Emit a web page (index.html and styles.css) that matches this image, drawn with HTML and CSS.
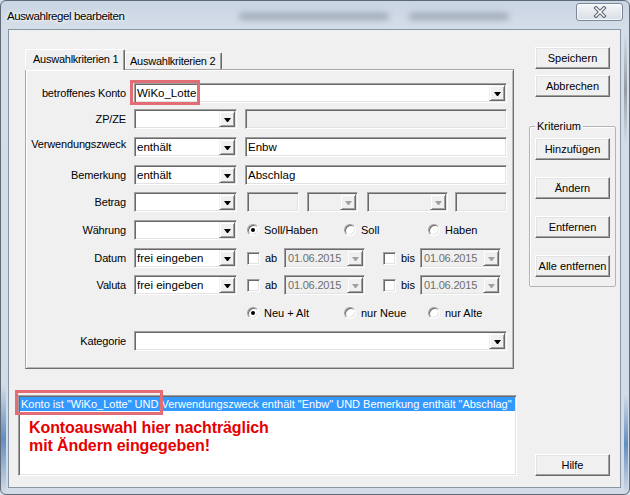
FILE: index.html
```html
<!DOCTYPE html>
<html>
<head>
<meta charset="utf-8">
<title>Auswahlregel bearbeiten</title>
<link rel="stylesheet" href="styles.css">
</head>
<body>

<div class="Window">
    <div class="TitleBar">
        <span class="TitleText">Auswahlregel bearbeiten</span>
        <span class="Ghost GhostOne"></span>
        <span class="Ghost GhostTwo"></span>
        <span class="CloseButton">
            <svg width="14" height="12" viewBox="0 0 14 12"><path d="M3 2 L11 10 M11 2 L3 10" stroke="#5b6674" stroke-width="3.6" stroke-linecap="square" fill="none"/><path d="M3 2 L11 10 M11 2 L3 10" stroke="#ffffff" stroke-width="1.5" stroke-linecap="square" fill="none"/></svg>
        </span>
    </div>

    <div class="Frame">
        <div class="Client">

            <div class="MainCol">
                <div class="TabStrip">
                    <span class="Tab Active">Auswahlkriterien 1</span>
                    <span class="Tab Second">Auswahlkriterien 2</span>
                </div>
                <div class="TabPanel">

                    <div class="FormRow">
                        <span class="FieldLabel">betroffenes Konto</span>
                        <div class="Combo Wide">
                            <span class="ComboText">WiKo_Lotte</span><span class="ComboBtn"></span>
                            <span class="Mark KontoMark"></span>
                        </div>
                    </div>

                    <div class="FormRow Gap6">
                        <span class="FieldLabel">ZP/ZE</span>
                        <div class="Combo Narrow"><span class="ComboText"></span><span class="ComboBtn"></span></div>
                        <div class="Edit Long Disabled"></div>
                    </div>

                    <div class="FormRow">
                        <span class="FieldLabel Raised">Verwendungszweck</span>
                        <div class="Combo Narrow"><span class="ComboText">enthält</span><span class="ComboBtn"></span></div>
                        <div class="Edit Long">Enbw</div>
                    </div>

                    <div class="FormRow">
                        <span class="FieldLabel">Bemerkung</span>
                        <div class="Combo Narrow"><span class="ComboText">enthält</span><span class="ComboBtn"></span></div>
                        <div class="Edit Long">Abschlag</div>
                    </div>

                    <div class="FormRow Gap7">
                        <span class="FieldLabel">Betrag</span>
                        <div class="Combo Narrow"><span class="ComboText"></span><span class="ComboBtn"></span></div>
                        <div class="Edit Disabled AmountA"></div>
                        <div class="Combo Disabled AmountB"><span class="ComboText"></span><span class="ComboBtn"></span></div>
                        <div class="Combo Disabled AmountC"><span class="ComboText"></span><span class="ComboBtn"></span></div>
                        <div class="Edit Disabled AmountD"></div>
                    </div>

                    <div class="FormRow">
                        <span class="FieldLabel">Währung</span>
                        <div class="Combo Narrow"><span class="ComboText"></span><span class="ComboBtn"></span></div>
                        <span class="Option First"><span class="Radio Checked"></span><span class="OptionText">Soll/Haben</span></span>
                        <span class="Option"><span class="Radio"></span><span class="OptionText">Soll</span></span>
                        <span class="Option"><span class="Radio"></span><span class="OptionText">Haben</span></span>
                    </div>

                    <div class="FormRow">
                        <span class="FieldLabel">Datum</span>
                        <div class="Combo Narrow"><span class="ComboText">frei eingeben</span><span class="ComboBtn"></span></div>
                        <span class="Check"></span><span class="CheckText">ab</span>
                        <div class="Combo Disabled DateBox"><span class="ComboText">01.06.2015</span><span class="ComboBtn"></span></div>
                        <span class="Check Later"></span><span class="CheckText">bis</span>
                        <div class="Combo Disabled DateBox"><span class="ComboText">01.06.2015</span><span class="ComboBtn"></span></div>
                    </div>

                    <div class="FormRow Gap7">
                        <span class="FieldLabel">Valuta</span>
                        <div class="Combo Narrow"><span class="ComboText">frei eingeben</span><span class="ComboBtn"></span></div>
                        <span class="Check"></span><span class="CheckText">ab</span>
                        <div class="Combo Disabled DateBox"><span class="ComboText">01.06.2015</span><span class="ComboBtn"></span></div>
                        <span class="Check Later"></span><span class="CheckText">bis</span>
                        <div class="Combo Disabled DateBox"><span class="ComboText">01.06.2015</span><span class="ComboBtn"></span></div>
                    </div>

                    <div class="FormRow">
                        <span class="FieldLabel"></span>
                        <span class="Spacer"></span>
                        <span class="Option First"><span class="Radio Checked"></span><span class="OptionText">Neu + Alt</span></span>
                        <span class="Option"><span class="Radio"></span><span class="OptionText">nur Neue</span></span>
                        <span class="Option"><span class="Radio"></span><span class="OptionText">nur Alte</span></span>
                    </div>

                    <div class="FormRow">
                        <span class="FieldLabel">Kategorie</span>
                        <div class="Combo Wide"><span class="ComboText"></span><span class="ComboBtn"></span></div>
                    </div>

                </div>

                <div class="ListBox">
                    <div class="ListItem Selected">Konto ist "WiKo_Lotte" UND Verwendungszweck enthält "Enbw" UND Bemerkung enthält "Abschlag"</div>
                    <div class="Note">Kontoauswahl hier nachträglich<br>mit Ändern eingegeben!</div>
                    <span class="Mark ListMark"></span>
                </div>
            </div>

            <div class="SideCol">
                <span class="Button">Speichern</span>
                <span class="Button">Abbrechen</span>
                <div class="GroupBox">
                    <span class="GroupTitle">Kriterium</span>
                    <span class="Button">Hinzufügen</span>
                    <span class="Button">Ändern</span>
                    <span class="Button">Entfernen</span>
                    <span class="Button">Alle entfernen</span>
                </div>
                <span class="Button HelpButton">Hilfe</span>
            </div>

        </div>
    </div>
</div>

</body>
</html>
```

FILE: styles.css
```css
	html, body {
		margin: 0;
		padding: 0;
	}
	body {
		font-family: "Liberation Sans", Arial, Helvetica, sans-serif;
		font-size: 11px;
		color: #000;
		background: #d3dde8;
	}

	/* window frame */
	.Window {
		box-sizing: border-box;
		width: 630px;
		height: 495px;
		border: 1px solid #5f6a76;
		border-radius: 6px;
		display: flex;
		flex-direction: column;
		overflow: hidden;
		background: linear-gradient(to bottom, #c8d5e3 0, #d5dee8 28px, #d3dce6 100%);
	}
	.TitleBar {
		flex: none;
		height: 28px;
		display: flex;
		align-items: center;
		padding-left: 6px;
	}
	.TitleText {
		font-size: 11.5px;
		letter-spacing: -0.4px;
		text-shadow: 0 0 6px #fff, 0 0 3px #fff;
		margin-top: 1px;
	}
	.Ghost {
		height: 7px;
		border-radius: 4px;
		background: rgba(45, 55, 75, 0.3);
		filter: blur(3px);
		margin-top: 2px;
	}
	.GhostOne {
		width: 150px;
		margin-left: 115px;
	}
	.GhostTwo {
		width: 100px;
		margin-left: 20px;
	}
	.CloseButton {
		box-sizing: border-box;
		width: 47px;
		height: 18px;
		margin: 2px 6px 0 auto;
		align-self: flex-start;
		border: 1px solid #7d8896;
		border-radius: 3px;
		background: linear-gradient(to bottom, #f4f6f9, #d8dfe7);
		box-shadow: inset 0 0 0 1px rgba(255, 255, 255, 0.7);
		display: flex;
		align-items: center;
		justify-content: center;
	}
	.Frame {
		flex: 1;
		display: flex;
		padding: 0 8px 6px 7px;
		background:
			linear-gradient(to bottom, rgba(60, 115, 180, 0), rgba(60, 115, 180, 0.75), rgba(60, 115, 180, 0)) left 0 top 355px / 5px 110px no-repeat,
			linear-gradient(to bottom, rgba(60, 115, 180, 0), rgba(60, 115, 180, 0.75), rgba(60, 115, 180, 0)) right 1px top 365px / 4px 100px no-repeat,
			linear-gradient(to bottom, rgba(70, 75, 85, 0), rgba(70, 75, 85, 0.45), rgba(70, 75, 85, 0)) right 2px top 5px / 3px 110px no-repeat;
	}
	.Client {
		flex: 1;
		display: flex;
		border: 1px solid #8796a5;
		background: #f0f0f0;
	}

	/* left part */
	.MainCol {
		flex: none;
		width: 518px;
	}
	.TabStrip {
		display: flex;
		align-items: flex-end;
		height: 20px;
		margin: 19px 0 0 16px;
		position: relative;
		z-index: 1;
	}
	.Tab {
		box-sizing: border-box;
		height: 17px;
		width: 97px;
		padding: 1px 0 0 4px;
		line-height: 15px;
		white-space: nowrap;
		letter-spacing: -0.25px;
		border: 1px solid;
		border-color: #fff #696969 transparent #fff;
		border-bottom: none;
		border-radius: 2px 2px 0 0;
		box-shadow: inset -1px 0 #a0a0a0;
		background: #f0f0f0;
	}
	.Tab.Active {
		width: 100px;
		height: 21px;
		margin-bottom: -1px;
		padding: 2px 0 0 7px;
		line-height: 15px;
	}
	.TabPanel {
		box-sizing: border-box;
		width: 489px;
		height: 300px;
		margin-left: 16px;
		padding-top: 13px;
		border: 1px solid;
		border-color: #a8a8a8 #6e6e6e #6e6e6e #a8a8a8;
		box-shadow: inset 1px 1px #fff, inset -1px -1px #b8b8b8;
		background: #f0f0f0;
	}

	.FormRow {
		display: flex;
		align-items: center;
		height: 20px;
		margin-top: 8px;
	}
	.FormRow:first-child {
		margin-top: 0;
	}
	.FormRow.Gap6 {
		margin-top: 6px;
	}
	.FormRow.Gap7 {
		margin-top: 7px;
	}
	.FieldLabel {
		flex: none;
		width: 100px;
		margin-right: 8px;
		text-align: right;
		white-space: nowrap;
		letter-spacing: -0.15px;
	}
	.FieldLabel.Raised {
		margin-bottom: 6px;
	}
	.Spacer {
		flex: none;
		width: 103px;
	}

	/* sunken boxes */
	.Combo, .Edit, .ListBox, .Check {
		box-sizing: border-box;
		border: 1px solid;
		border-color: #a0a0a0 #fff #fff #a0a0a0;
		box-shadow: inset 1px 1px #696969, inset -1px -1px #e3e3e3;
		background: #fff;
	}
	.Combo {
		position: relative;
		flex: none;
		height: 20px;
		display: flex;
		padding: 1px;
	}
	.ComboText {
		flex: 1;
		padding-left: 1px;
		font-size: 11.5px;
		line-height: 17px;
		white-space: nowrap;
		overflow: hidden;
	}
	.ComboBtn {
		box-sizing: border-box;
		flex: none;
		width: 16px;
		height: 16px;
		border: 1px solid;
		border-color: #f0f0f0 #696969 #696969 #f0f0f0;
		box-shadow: inset 1px 1px #fff, inset -1px -1px #a0a0a0;
		background: #f0f0f0;
		display: flex;
		align-items: center;
		justify-content: center;
	}
	.ComboBtn::after {
		content: "";
		width: 1px;
		height: 0;
		border-left: 3px solid transparent;
		border-right: 3px solid transparent;
		border-top: 4px solid #000;
		margin-top: 1px;
	}
	.Combo.Disabled {
		background: #f0f0f0;
		color: #6d6d6d;
	}
	.Combo.Disabled .ComboBtn::after {
		border-top-color: #a0a0a0;
	}
	.Narrow {
		width: 103px;
	}
	.Wide {
		width: 373px;
	}
	.Edit {
		flex: none;
		height: 20px;
		padding: 1px 2px 1px 2px;
		font-size: 11.5px;
		line-height: 17px;
	}
	.Edit.Disabled {
		background: #f0f0f0;
	}
	.Long {
		width: 262px;
		margin-left: 8px;
	}
	.AmountA {
		width: 52px;
		margin-left: 10px;
	}
	.AmountB {
		width: 51px;
		margin-left: 8px;
	}
	.AmountC {
		width: 81px;
		margin-left: 9px;
	}
	.AmountD {
		width: 52px;
		margin-left: 7px;
	}
	.DateBox {
		width: 81px;
	}
	.DateBox .ComboText {
		font-size: 11px;
		padding-left: 2px;
		letter-spacing: -0.2px;
	}

	/* radio + check */
	.Option {
		flex: none;
		display: flex;
		align-items: center;
		width: 84px;
	}
	.Option.First {
		width: 97px;
		margin-left: 10px;
	}
	.Radio {
		box-sizing: border-box;
		flex: none;
		width: 12px;
		height: 12px;
		border-radius: 50%;
		border: 1px solid;
		border-color: #a0a0a0 #fff #fff #a0a0a0;
		box-shadow: inset 1px 1px #696969, inset -1px -1px #e3e3e3;
		background: #fff;
		display: flex;
		align-items: center;
		justify-content: center;
	}
	.Radio.Checked::after {
		content: "";
		width: 4px;
		height: 4px;
		border-radius: 50%;
		background: #000;
	}
	.OptionText {
		margin-left: 5px;
		white-space: nowrap;
	}
	.Check {
		flex: none;
		width: 13px;
		height: 13px;
		margin-left: 10px;
	}
	.Check.Later {
		margin-left: 18px;
	}
	.CheckText {
		flex: none;
		width: 19px;
		margin-left: 5px;
	}

	/* list at the bottom */
	.ListBox {
		position: relative;
		width: 499px;
		height: 81px;
		margin: 26px 0 0 9px;
		padding: 1px 1px 0 1px;
	}
	.ListItem {
		height: 14px;
		line-height: 14px;
		padding-left: 1px;
		white-space: nowrap;
		overflow: hidden;
	}
	.ListItem.Selected {
		background: #3399ff;
		color: #fff;
	}
	.Note {
		margin: 8px 0 0 9px;
		font-size: 16px;
		font-weight: bold;
		line-height: 18px;
		color: #e60000;
		letter-spacing: -0.1px;
	}
	.Mark {
		position: absolute;
		box-sizing: border-box;
		border: 3px solid #e36d75;
		pointer-events: none;
	}
	.KontoMark {
		left: -5px;
		top: -4px;
		width: 70px;
		height: 25px;
	}
	.ListMark {
		left: -4px;
		top: -6px;
		width: 148px;
		height: 25px;
	}

	/* right buttons */
	.SideCol {
		flex: 1;
		display: flex;
		flex-direction: column;
		align-items: flex-start;
		padding: 17px 0 11px 0;
	}
	.Button {
		box-sizing: border-box;
		width: 75px;
		height: 22px;
		margin-left: 8px;
		border: 1px solid;
		border-color: #fff #696969 #696969 #fff;
		box-shadow: inset -1px -1px #a0a0a0, inset 1px 1px #e3e3e3;
		background: #f0f0f0;
		display: flex;
		align-items: center;
		justify-content: center;
		white-space: nowrap;
	}
	.Button + .Button {
		margin-top: 6px;
	}
	.GroupBox {
		box-sizing: border-box;
		width: 87px;
		height: 161px;
		margin: 29px 0 0 2px;
		border: 1px solid #b4b4b4;
		border-radius: 2px;
		box-shadow: inset 1px 1px #fff;
		display: flex;
		flex-direction: column;
		align-items: flex-start;
	}
	.GroupTitle {
		height: 13px;
		line-height: 13px;
		margin: -7px 0 0 5px;
		padding: 0 2px;
		background: #f0f0f0;
	}
	.GroupBox .Button {
		margin: 17px 0 0 5px;
	}
	.GroupBox .GroupTitle + .Button {
		margin-top: 5px;
	}
	.HelpButton {
		margin-top: auto;
	}
```
